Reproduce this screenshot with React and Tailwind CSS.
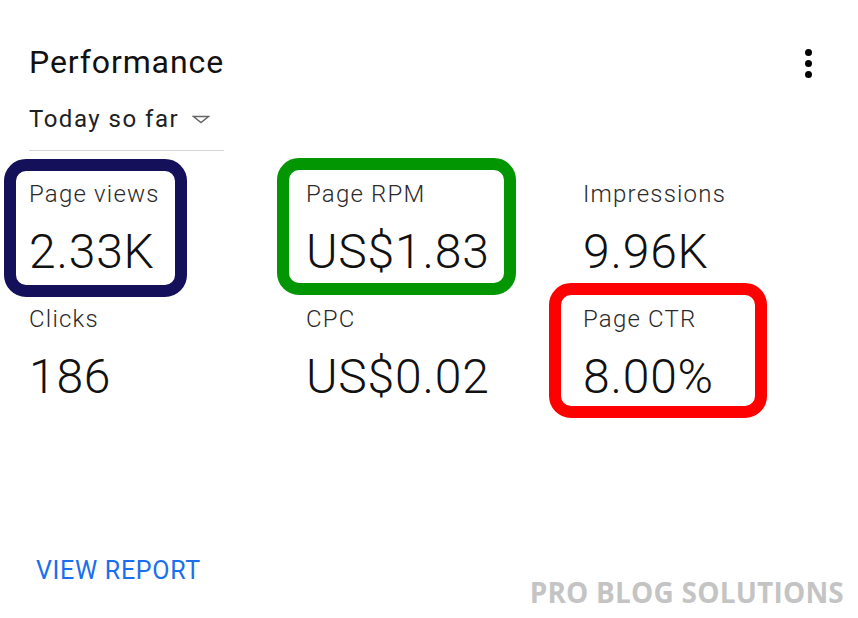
import React from "react";

const metrics = [
  { label: "Page views", value: "2.33K", box: "navy" },
  { label: "Page RPM", value: "US$1.83", box: "green" },
  { label: "Impressions", value: "9.96K" },
  { label: "Clicks", value: "186" },
  { label: "CPC", value: "US$0.02" },
  { label: "Page CTR", value: "8.00%", box: "red" },
];

function Highlight({ kind }) {
  // hand-drawn annotation boxes lying over the metric cells
  if (kind === "navy") {
    return <div className="absolute left-[-25px] top-[-19px] w-[183px] h-[138px] rounded-[22px] border-[12px] border-[#15105a] pointer-events-none" />;
  }
  if (kind === "green") {
    return <div className="absolute left-[-29px] top-[-20px] w-[239px] h-[137px] rounded-[22px] border-[12px] border-[#039603] pointer-events-none" />;
  }
  if (kind === "red") {
    return <div className="absolute left-[-34px] top-[-20px] w-[218px] h-[135px] rounded-[22px] border-[12px] border-[#fe0000] pointer-events-none" />;
  }
  return null;
}

function Metric({ label, value, box }) {
  return (
    <div className="relative">
      <Highlight kind={box} />
      <div className="text-[24px] leading-[32px] font-light text-[#2a2a2a] tracking-[1.2px]">{label}</div>
      <div className="mt-[14px] text-[48px] leading-[56px] font-light text-[#111] tracking-[0.8px]">{value}</div>
    </div>
  );
}

export default function App() {
  return (
    <div className="relative w-[858px] h-[618px] bg-white overflow-hidden font-['Roboto',sans-serif] flex flex-col">
      <div className="flex items-start justify-between pl-[29px] pr-[46px] pt-[42px]">
        <h1 className="text-[32px] leading-[40px] text-[#111] tracking-[0.9px]">Performance</h1>
        <div className="flex flex-col items-center gap-[4px] pt-[7px]">
          <span className="w-[7px] h-[7px] rounded-full bg-black" />
          <span className="w-[7px] h-[7px] rounded-full bg-black" />
          <span className="w-[7px] h-[7px] rounded-full bg-black" />
        </div>
      </div>

      <div className="pl-[29px] mt-[21px] w-[224px]">
        <div className="flex items-center">
          <span className="text-[24px] leading-[32px] text-[#202124] tracking-[1.5px]">Today so far</span>
          <svg className="ml-[13px]" width="18" height="9" viewBox="0 0 18 9">
            <polygon points="1.5,1.5 16.5,1.5 9,7.5" fill="none" stroke="#666" strokeWidth="1.4" />
          </svg>
        </div>
        <div className="mt-[15px] h-px bg-[#d5d5d5]" />
      </div>

      <div className="pl-[29px] mt-[27px] grid grid-cols-[277px_277px_1fr] gap-y-[23px]">
        {metrics.map((m) => (
          <Metric key={m.label} {...m} />
        ))}
      </div>

      <div className="mt-auto pl-[36px] pb-[32px]">
        <span className="text-[25px] leading-[30px] text-[#1a6fee] tracking-[0.7px]">VIEW REPORT</span>
      </div>

      <div className="absolute right-[14px] bottom-[10px] font-['Open_Sans',sans-serif] font-bold text-[28px] leading-[32px] text-[#c4c4c4] tracking-[0.2px]">
        PRO BLOG SOLUTIONS
      </div>
    </div>
  );
}
